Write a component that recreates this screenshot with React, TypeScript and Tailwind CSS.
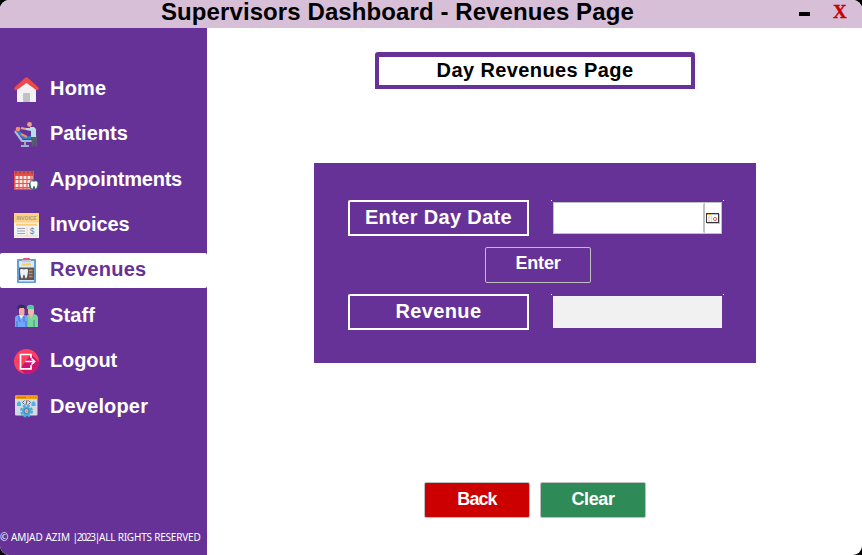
import type { ReactNode } from "react";

function Icon({ children }: { children: ReactNode }) {
  return (
    <svg className="h-[25px] w-[25px] shrink-0" viewBox="0 0 25 25">
      {children}
    </svg>
  );
}

const HomeIcon = () => (
  <Icon>
    <path d="M3 11 12.500 4 22 11V25H3Z" fill="#f1f0f2" />
    <rect x="9" y="16" width="7" height="9" rx="1" fill="#c1c1c4" />
    <path d="M0.500 12.500C-0.200 11.500 0.200 10.600 1 10L11 1Q12.500-0.300 14 1L24 10C24.900 10.700 25.200 11.600 24.500 12.500C23.800 13.300 22.600 13.400 21.800 12.700L12.500 6L3.200 12.700C2.400 13.400 1.200 13.300 0.500 12.500Z" fill="#ee4949" />
  </Icon>
);

const PatientsIcon = () => (
  <Icon>
    <path d="M1 9 8 19H18" stroke="#a9bdd4" strokeWidth="2.200" fill="none" />
    <path d="M11 19V23M7 24H15" stroke="#9fb2c8" strokeWidth="1.800" />
    <path d="M2 9 6 9 10 15 17 14V17H9Z" fill="#2787ca" />
    <path d="M7 12 13 15" stroke="#ef8a75" strokeWidth="2" />
    <circle cx="4" cy="7" r="2.300" fill="#f18e78" />
    <circle cx="15.500" cy="2.500" r="2.400" fill="#f2a18d" />
    <path d="M17.500 13H23V24.500H20.800V17L19.800 24.500H17.500Z" fill="#51606c" />
    <path d="M16 5H20L22 7V15H17V9L12 8V6H16Z" fill="#b9dce8" />
    <path d="M7 6 12 7" stroke="#f2a18d" strokeWidth="1.800" />
  </Icon>
);

const AppointmentsIcon = () => (
  <Icon>
    <rect x="0" y="4" width="20" height="19" fill="#ec4c43" />
    <rect x="1.500" y="9" width="17" height="12.500" fill="#f7e9e5" />
    <path d="M5 9V22M9 9V22M13 9V22M17 9V22M1 12.500H19M1 16.500H19M1 20.500H19" stroke="#ee554a" strokeWidth="1.200" />
    <path d="M2 3.500V7M6 3.500V7M10 3.500V7M14 3.500V7M18 3.500V7" stroke="#74585d" strokeWidth="1.500" />
    <circle cx="20" cy="18" r="5" fill="#406679" />
    <path d="M16.500 16C16.500 13.700 19 14 20 14.800C21 14 23.500 13.700 23.500 16C23.500 18 22.700 21.700 21.700 21.700C21 21.700 21 18.800 20 18.800S19 21.700 18.300 21.700C17.300 21.700 16.500 18 16.500 16Z" fill="#fff" />
  </Icon>
);

const InvoicesIcon = () => (
  <Icon>
    <rect x="0" y="0" width="25" height="25" fill="#edf3f8" />
    <rect x="0" y="0" width="25" height="9.500" fill="#ffd17c" />
    <text x="12.500" y="6.500" textAnchor="middle" fontSize="5.600" fontWeight="700" fill="#a29a8c" textLength="20" lengthAdjust="spacingAndGlyphs" className="font-['Liberation_Sans',sans-serif]">INVOICE</text>
    <path d="M2 11.700H23" stroke="#ffcb70" strokeWidth="2" />
    <path d="M3 15.500H11M3 18H11M3 20.500H11" stroke="#929da8" strokeWidth="0.900" />
    <path d="M13 14V23M1 23H24" stroke="#ffcf82" strokeWidth="0.800" />
    <text x="18" y="21" textAnchor="middle" fontSize="8.500" fill="#7c8790" className="font-['Liberation_Sans',sans-serif]">$</text>
  </Icon>
);

const RevenuesIcon = () => (
  <Icon>
    <rect x="3" y="1" width="19" height="24" rx="0.800" fill="#639dd5" />
    <rect x="5" y="3" width="15" height="20.500" fill="#d9ebf6" />
    <rect x="9" y="0" width="7" height="2.500" rx="1" fill="#ed4f86" />
    <rect x="8" y="2" width="9" height="2.200" fill="#c0cbd7" />
    <rect x="8" y="5.500" width="9" height="2" fill="#f6ce69" />
    <rect x="5" y="9.500" width="15" height="12.500" fill="#655259" />
    <path d="M6 12.500C6 10.500 9 11 10 11.600C11 11 14 10.500 14 12.500C14 15 13 20.500 11.900 20.500C10.900 20.500 11 16.500 10 16.500S9.100 20.500 8.100 20.500C7 20.500 6 15 6 12.500Z" fill="#e9f3fa" />
    <path d="M15 12.500H18.500M15 15.500H18.500M15 18.500H18.500" stroke="#bd9655" strokeWidth="1.500" />
  </Icon>
);

const StaffIcon = () => (
  <Icon>
    <path d="M12 24V15Q12 11 18 11Q24 11 24 15V24Z" fill="#78d89c" />
    <path d="M15 12H19L17 16Z" fill="#edb4a3" />
    <rect x="14" y="4" width="6" height="8" rx="2.500" fill="#f3b8a6" />
    <path d="M13 6V3Q16.500 0.500 20 3V6Z" fill="#55c99c" />
    <path d="M1 24V15Q1 12 6 12H10Q14 12 14 16V24Z" fill="#72a5fc" />
    <path d="M5 12 7 16 10 12Z" fill="#eef1ff" />
    <rect x="5" y="4" width="5.500" height="8.500" rx="2.500" fill="#f3aaa0" />
    <path d="M3.500 7V3Q7 0 11.500 3V7L10 5H6Z" fill="#322d60" />
    <path d="M5 13V17Q5 19 7 18M10 13V19M3 18V24M12 18V24M20 17V24" stroke="#3566aa" strokeWidth="0.700" fill="none" />
  </Icon>
);

const LogoutIcon = () => (
  <Icon>
    <circle cx="12.500" cy="12.500" r="12.500" fill="#ff3f5f" />
    <path d="M6 20 17 5 25 13A12.500 12.500 0 0 1 11 24.900Z" fill="#cf1373" />
    <path d="M17 9V5.500H6.500V19.800H17V16" fill="none" stroke="#fff" strokeWidth="1.700" />
    <path d="M11.500 12.500H20M17.500 9.500 20.700 12.500 17.500 15.500" fill="none" stroke="#fff" strokeWidth="1.600" />
  </Icon>
);

const DeveloperIcon = () => (
  <Icon>
    <rect x="1" y="1.500" width="22.500" height="20" rx="1" fill="#d5d9e3" />
    <path d="M1 5V2Q1 1.500 2 1.500H22.500Q23.500 1.500 23.500 2.500V5Z" fill="#f5a013" />
    <path d="M3 3.300H12M16 3.300H17M19 3.300H20M21.500 3.300H22.500" stroke="#bc6b24" />
    <path d="M10.500 6.500 8.500 8.500 10.500 10.500M14.500 6.500 16.500 8.500 14.500 10.500M13 6 12 11" stroke="#49596b" strokeWidth="0.900" fill="none" />
    <path d="M3 9 5 7 7 9V12H3ZM17.500 9 19.500 7 21.500 9V12H17.500Z" fill="#51b1e0" />
    <circle cx="12.500" cy="17" r="4.500" fill="#4aacdf" />
    <circle cx="12.500" cy="17" r="5.300" fill="none" stroke="#4aacdf" strokeWidth="2.400" strokeDasharray="2.600 1.560" />
    <circle cx="12.500" cy="17" r="2.500" fill="#bcc6d2" stroke="#49769d" />
    <circle cx="12.500" cy="17" r="1" fill="#f08c71" />
  </Icon>
);

const navItems = [
  { label: "Home", icon: <HomeIcon />, spacing: "tracking-[0.2px]" },
  { label: "Patients", icon: <PatientsIcon />, spacing: "tracking-[0px]" },
  { label: "Appointments", icon: <AppointmentsIcon />, spacing: "tracking-[-0.2px]" },
  { label: "Invoices", icon: <InvoicesIcon />, spacing: "tracking-[-0.05px]" },
  { label: "Revenues", icon: <RevenuesIcon />, spacing: "tracking-[0.25px]", active: true },
  { label: "Staff", icon: <StaffIcon />, spacing: "tracking-[0.1px]" },
  { label: "Logout", icon: <LogoutIcon />, spacing: "tracking-[-0.1px]" },
  { label: "Developer", icon: <DeveloperIcon />, spacing: "tracking-[0.150px]" },
];

function Sidebar() {
  return (
    <aside className="flex w-[207px] shrink-0 flex-col justify-between bg-[#663297] pt-[43.500px] pb-[10px]">
      <nav className="flex flex-col gap-[10.400px]">
        {navItems.map((item) => (
          <a
            key={item.label}
            className={`flex h-[35px] items-center gap-[11px] rounded-[2px] pl-[14px] ${item.active ? "bg-white text-[#663297]" : "text-white"}`}
          >
            {item.icon}
            <span
              className={`text-[20px] leading-[24px] font-bold ${item.active ? "-mt-[3px]" : "-mt-[2px]"} ${item.spacing}`}
            >
              {item.label}
            </span>
          </a>
        ))}
      </nav>
      <p className="font-['Noto_Sans',sans-serif] text-[10px] leading-[16px] whitespace-nowrap text-white">
        <span className="tracking-[0px]">© AMJAD AZIM </span>
        <span className="tracking-[-1.250px]">|2023|</span>
        <span className="tracking-[-0.200px]">ALL RIGHTS RESERVED</span>
      </p>
    </aside>
  );
}

function FieldLabel({ children }: { children: ReactNode }) {
  return (
    <div className="flex h-[36px] w-[181px] items-center justify-center rounded-tl-[2px] border-2 border-white pb-[2px] text-[20px] leading-[24px] font-bold tracking-[0.350px] text-white">
      {children}
    </div>
  );
}

/* Single-pixel highlights just outside a field's upper corners */
function CornerDots() {
  return (
    <>
      <i className="absolute -top-[2px] -left-[2px] h-px w-px bg-white" />
      <i className="absolute -top-[2px] -right-[2px] h-px w-px bg-white" />
    </>
  );
}

function CalendarIcon() {
  return (
    <svg className="h-[11px] w-[14px] shrink-0" viewBox="0 0 14 11">
      <path d="M1 1H14V11H1Z" fill="#c8c8c8" />
      <rect x="0.500" y="0.500" width="12" height="9" fill="#fff" stroke="#353535" />
      <path d="M1 1.500H6" stroke="#ffb631" />
      <path d="M6 1.500H12" stroke="#aac7f5" />
      <path d="M3 3V9M5.500 3V9" stroke="#dedede" strokeWidth="1.500" />
      <circle cx="9" cy="6" r="1.600" fill="#fff" stroke="#ed5863" />
    </svg>
  );
}

export default function App() {
  return (
    <div className="h-[555px] w-[862px] bg-black">
      <div className="flex h-full flex-col overflow-hidden rounded-[9px] bg-white font-['Liberation_Sans',Arial,sans-serif]">
        <header className="flex h-[28px] shrink-0 items-start bg-[#d8bfd8] pl-[161px]">
          <h1 className="w-[638px] text-[24px] leading-[24px] font-bold tracking-[0.090px] whitespace-nowrap text-black">
            Supervisors Dashboard - Revenues Page
          </h1>
          <button className="mt-[12px] h-[4px] w-[11px] bg-black" aria-label="Minimize" />
          <button className="ml-[23px] font-['Liberation_Serif',serif] text-[19px] leading-[24px] font-bold text-[#cc0000] [-webkit-text-stroke:0.4px_#cc0000]">X</button>
        </header>
        <div className="flex min-h-0 flex-1">
          <Sidebar />
          <main className="flex flex-1 flex-col items-start">
            <h2 className="mt-[24px] ml-[168px] flex h-[37px] w-[320px] items-center justify-center rounded-t-[3px] border-4 border-t-[5px] border-[#663297] pb-[2px] text-[20px] leading-[24px] font-bold tracking-[0.400px] text-black">
              Day Revenues Page
            </h2>
            <section className="mt-[74px] ml-[107px] flex h-[200px] w-[442px] flex-col bg-[#663297] pt-[37px] pl-[34px]">
              <div className="flex h-[36px] items-start">
                <FieldLabel>Enter Day Date</FieldLabel>
                <div className="relative mt-[2px] ml-[24px] h-[32px] w-[169px]">
                  <div className="flex h-full border border-[#c0c0c0] bg-white">
                    <div className="flex-1" />
                    <button className="flex w-[18px] items-center justify-center rounded-[2px] border-l-2 border-[#c0c0c0]" aria-label="Pick date">
                      <CalendarIcon />
                    </button>
                  </div>
                  <CornerDots />
                </div>
              </div>
              <button className="mt-[11px] ml-[137px] flex h-[36px] w-[106px] items-center justify-center rounded-[2px] border border-[#c0c0c0] pb-[4px] text-[18px] leading-[22px] font-bold tracking-[-0.200px] text-white">
                Enter
              </button>
              <div className="mt-[11px] flex items-start">
                <FieldLabel>Revenue</FieldLabel>
                <div className="relative mt-[2px] ml-[24px] h-[32px] w-[169px] bg-[#f1f1f1]">
                  <CornerDots />
                </div>
              </div>
            </section>
            <div className="mt-[119px] ml-[217px] flex gap-[10px]">
              <button className="flex h-[36px] w-[106px] items-center justify-center rounded-[2px] border border-[#c0c0c0] bg-[#cc0000] pb-[3px] text-[18px] leading-[22px] font-bold tracking-[-0.900px] text-white">
                Back
              </button>
              <button className="flex h-[36px] w-[106px] items-center justify-center rounded-[2px] border border-[#c0c0c0] bg-[#2e8b57] pb-[3px] text-[18px] leading-[22px] font-bold tracking-[-0.400px] text-white">
                Clear
              </button>
            </div>
          </main>
        </div>
      </div>
    </div>
  );
}
